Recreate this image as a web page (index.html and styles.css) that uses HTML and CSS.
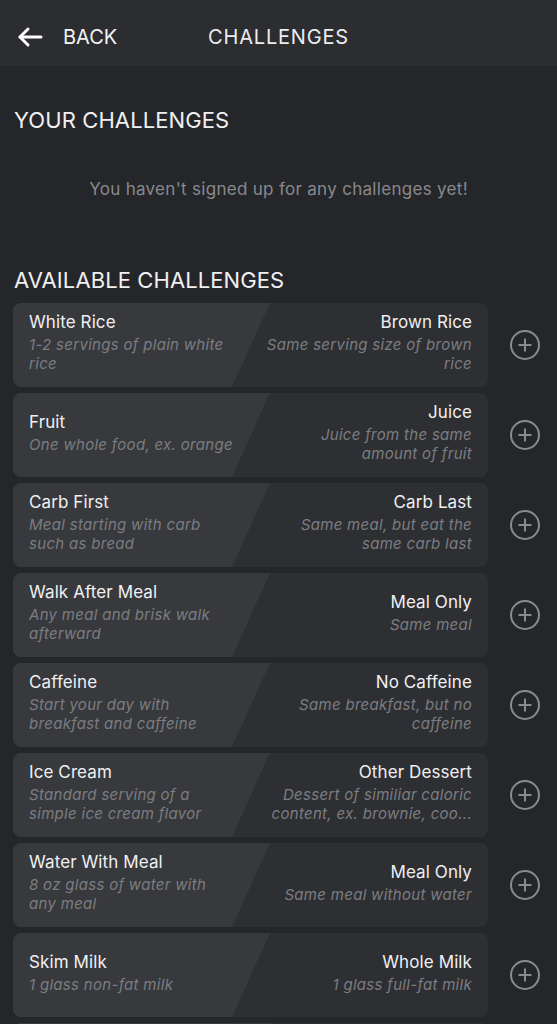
FILE: index.html
```html
<!DOCTYPE html>
<html lang="en">
<head>
  <meta charset="UTF-8" />
  <meta name="viewport" content="width=device-width, initial-scale=1.0"/>
  <title>Challenges</title>
  <link rel="stylesheet" href="styles.css">
</head>
<body>

<header class="topbar">
  <a href="#" class="back">
    <svg width="26" height="22" viewBox="0 0 26 22" fill="none" stroke="#ffffff" stroke-width="3" stroke-linecap="round" stroke-linejoin="round">
      <path d="M24 11H3"/>
      <path d="M11 3L3 11L11 19"/>
    </svg>
    <span>BACK</span>
  </a>
  <h1>CHALLENGES</h1>
</header>

<main>
  <h2 class="section-title">YOUR CHALLENGES</h2>
  <p class="empty">You haven't signed up for any challenges yet!</p>

  <h2 class="section-title available">AVAILABLE CHALLENGES</h2>

  <div class="challenge-list">

    <div class="challenge">
      <div class="card">
        <div class="side left">
          <div class="name">White Rice</div>
          <div class="desc">1-2 servings of plain white rice</div>
        </div>
        <div class="side right">
          <div class="name">Brown Rice</div>
          <div class="desc">Same serving size of brown rice</div>
        </div>
      </div>
      <button class="add"><span></span></button>
    </div>

    <div class="challenge">
      <div class="card">
        <div class="side left">
          <div class="name">Fruit</div>
          <div class="desc">One whole food, ex. orange</div>
        </div>
        <div class="side right">
          <div class="name">Juice</div>
          <div class="desc">Juice from the same amount of fruit</div>
        </div>
      </div>
      <button class="add"><span></span></button>
    </div>

    <div class="challenge">
      <div class="card">
        <div class="side left">
          <div class="name">Carb First</div>
          <div class="desc">Meal starting with carb such as bread</div>
        </div>
        <div class="side right">
          <div class="name">Carb Last</div>
          <div class="desc">Same meal, but eat the same carb last</div>
        </div>
      </div>
      <button class="add"><span></span></button>
    </div>

    <div class="challenge">
      <div class="card">
        <div class="side left">
          <div class="name">Walk After Meal</div>
          <div class="desc">Any meal and brisk walk afterward</div>
        </div>
        <div class="side right">
          <div class="name">Meal Only</div>
          <div class="desc">Same meal</div>
        </div>
      </div>
      <button class="add"><span></span></button>
    </div>

    <div class="challenge">
      <div class="card">
        <div class="side left">
          <div class="name">Caffeine</div>
          <div class="desc">Start your day with breakfast and caffeine</div>
        </div>
        <div class="side right">
          <div class="name">No Caffeine</div>
          <div class="desc">Same breakfast, but no caffeine</div>
        </div>
      </div>
      <button class="add"><span></span></button>
    </div>

    <div class="challenge">
      <div class="card">
        <div class="side left">
          <div class="name">Ice Cream</div>
          <div class="desc">Standard serving of a simple ice cream flavor</div>
        </div>
        <div class="side right">
          <div class="name">Other Dessert</div>
          <div class="desc">Dessert of similiar caloric content, ex. brownie, coo...</div>
        </div>
      </div>
      <button class="add"><span></span></button>
    </div>

    <div class="challenge">
      <div class="card">
        <div class="side left">
          <div class="name">Water With Meal</div>
          <div class="desc">8 oz glass of water with any meal</div>
        </div>
        <div class="side right">
          <div class="name">Meal Only</div>
          <div class="desc">Same meal without water</div>
        </div>
      </div>
      <button class="add"><span></span></button>
    </div>

    <div class="challenge">
      <div class="card">
        <div class="side left">
          <div class="name">Skim Milk</div>
          <div class="desc">1 glass non-fat milk</div>
        </div>
        <div class="side right">
          <div class="name">Whole Milk</div>
          <div class="desc">1 glass full-fat milk</div>
        </div>
      </div>
      <button class="add"><span></span></button>
    </div>

    <!-- next row, scrolled below the fold -->
    <div class="challenge">
      <div class="card"></div>
      <button class="add"><span></span></button>
    </div>

  </div>
</main>

</body>
</html>
```

FILE: styles.css
```css
body {
  font-family: Inter, "Noto Sans", Arial, sans-serif;
  margin: 0;
  background: #25262a;
  color: #ececee;
  height: 1024px;
  overflow: hidden;
}

/* Top bar */
.topbar {
  height: 66px;
  background: #2c2d31;
  display: flex;
  align-items: center;
  position: relative;
  padding: 8px 0 0 17px;
  box-sizing: border-box;
}
.back {
  display: flex;
  align-items: center;
  gap: 20px;
  color: #f2f2f4;
  text-decoration: none;
  font-size: 20px;
}
.topbar h1 {
  position: absolute;
  left: 0;
  right: 0;
  top: 8px;
  bottom: 0;
  margin: 0;
  display: flex;
  align-items: center;
  justify-content: center;
  font-size: 20px;
  font-weight: 400;
  letter-spacing: 0.8px;
  color: #ececee;
  pointer-events: none;
}

main {
  padding: 0 0 0 13px;
}
.section-title {
  margin: 40px 0 0 1px;
  font-size: 22px;
  font-weight: 400;
  line-height: 28px;
  letter-spacing: 0.1px;
  color: #f0f0f2;
}
.section-title.available {
  margin-top: 66px;
}
.empty {
  margin: 44px 13px 0 0;
  text-align: center;
  font-size: 17px;
  line-height: 22px;
  letter-spacing: 0.3px;
  color: #88898c;
}

/* Challenge rows */
.challenge-list {
  margin-top: 9px;
  display: flex;
  flex-direction: column;
  gap: 6px;
}
.challenge {
  display: flex;
  align-items: center;
}
.card {
  position: relative;
  width: 475px;
  height: 84px;
  flex-shrink: 0;
  box-sizing: border-box;
  padding: 8px 16px 14px;
  background: #2e2f33;
  border-radius: 8px;
  overflow: hidden;
  display: grid;
  grid-template-columns: 205px 210px;
  justify-content: space-between;
  align-items: center;
}
.card::before {
  content: "";
  position: absolute;
  inset: 0;
  background: #37393d;
  clip-path: polygon(0 0, 257px 0, 219px 100%, 0 100%);
}
.side {
  position: relative;
}
.side.right {
  text-align: right;
}
.name {
  font-size: 17px;
  line-height: 22px;
  margin-bottom: 2px;
  letter-spacing: 0.1px;
  color: #f0f0f2;
}
.desc {
  font-size: 15px;
  line-height: 19px;
  font-style: italic;
  letter-spacing: 0.3px;
  color: #7c7d81;
  display: -webkit-box;
  -webkit-line-clamp: 2;
  -webkit-box-orient: vertical;
  overflow: hidden;
}

.add {
  margin-left: 22px;
  width: 30px;
  height: 30px;
  padding: 0;
  border: 2px solid #8a8b8e;
  border-radius: 50%;
  background: none;
  position: relative;
  cursor: pointer;
}
.add span::before,
.add span::after {
  content: "";
  position: absolute;
  left: 50%;
  top: 50%;
  background: #8a8b8e;
  transform: translate(-50%, -50%);
}
.add span::before {
  width: 13px;
  height: 2px;
}
.add span::after {
  width: 2px;
  height: 13px;
}
```
